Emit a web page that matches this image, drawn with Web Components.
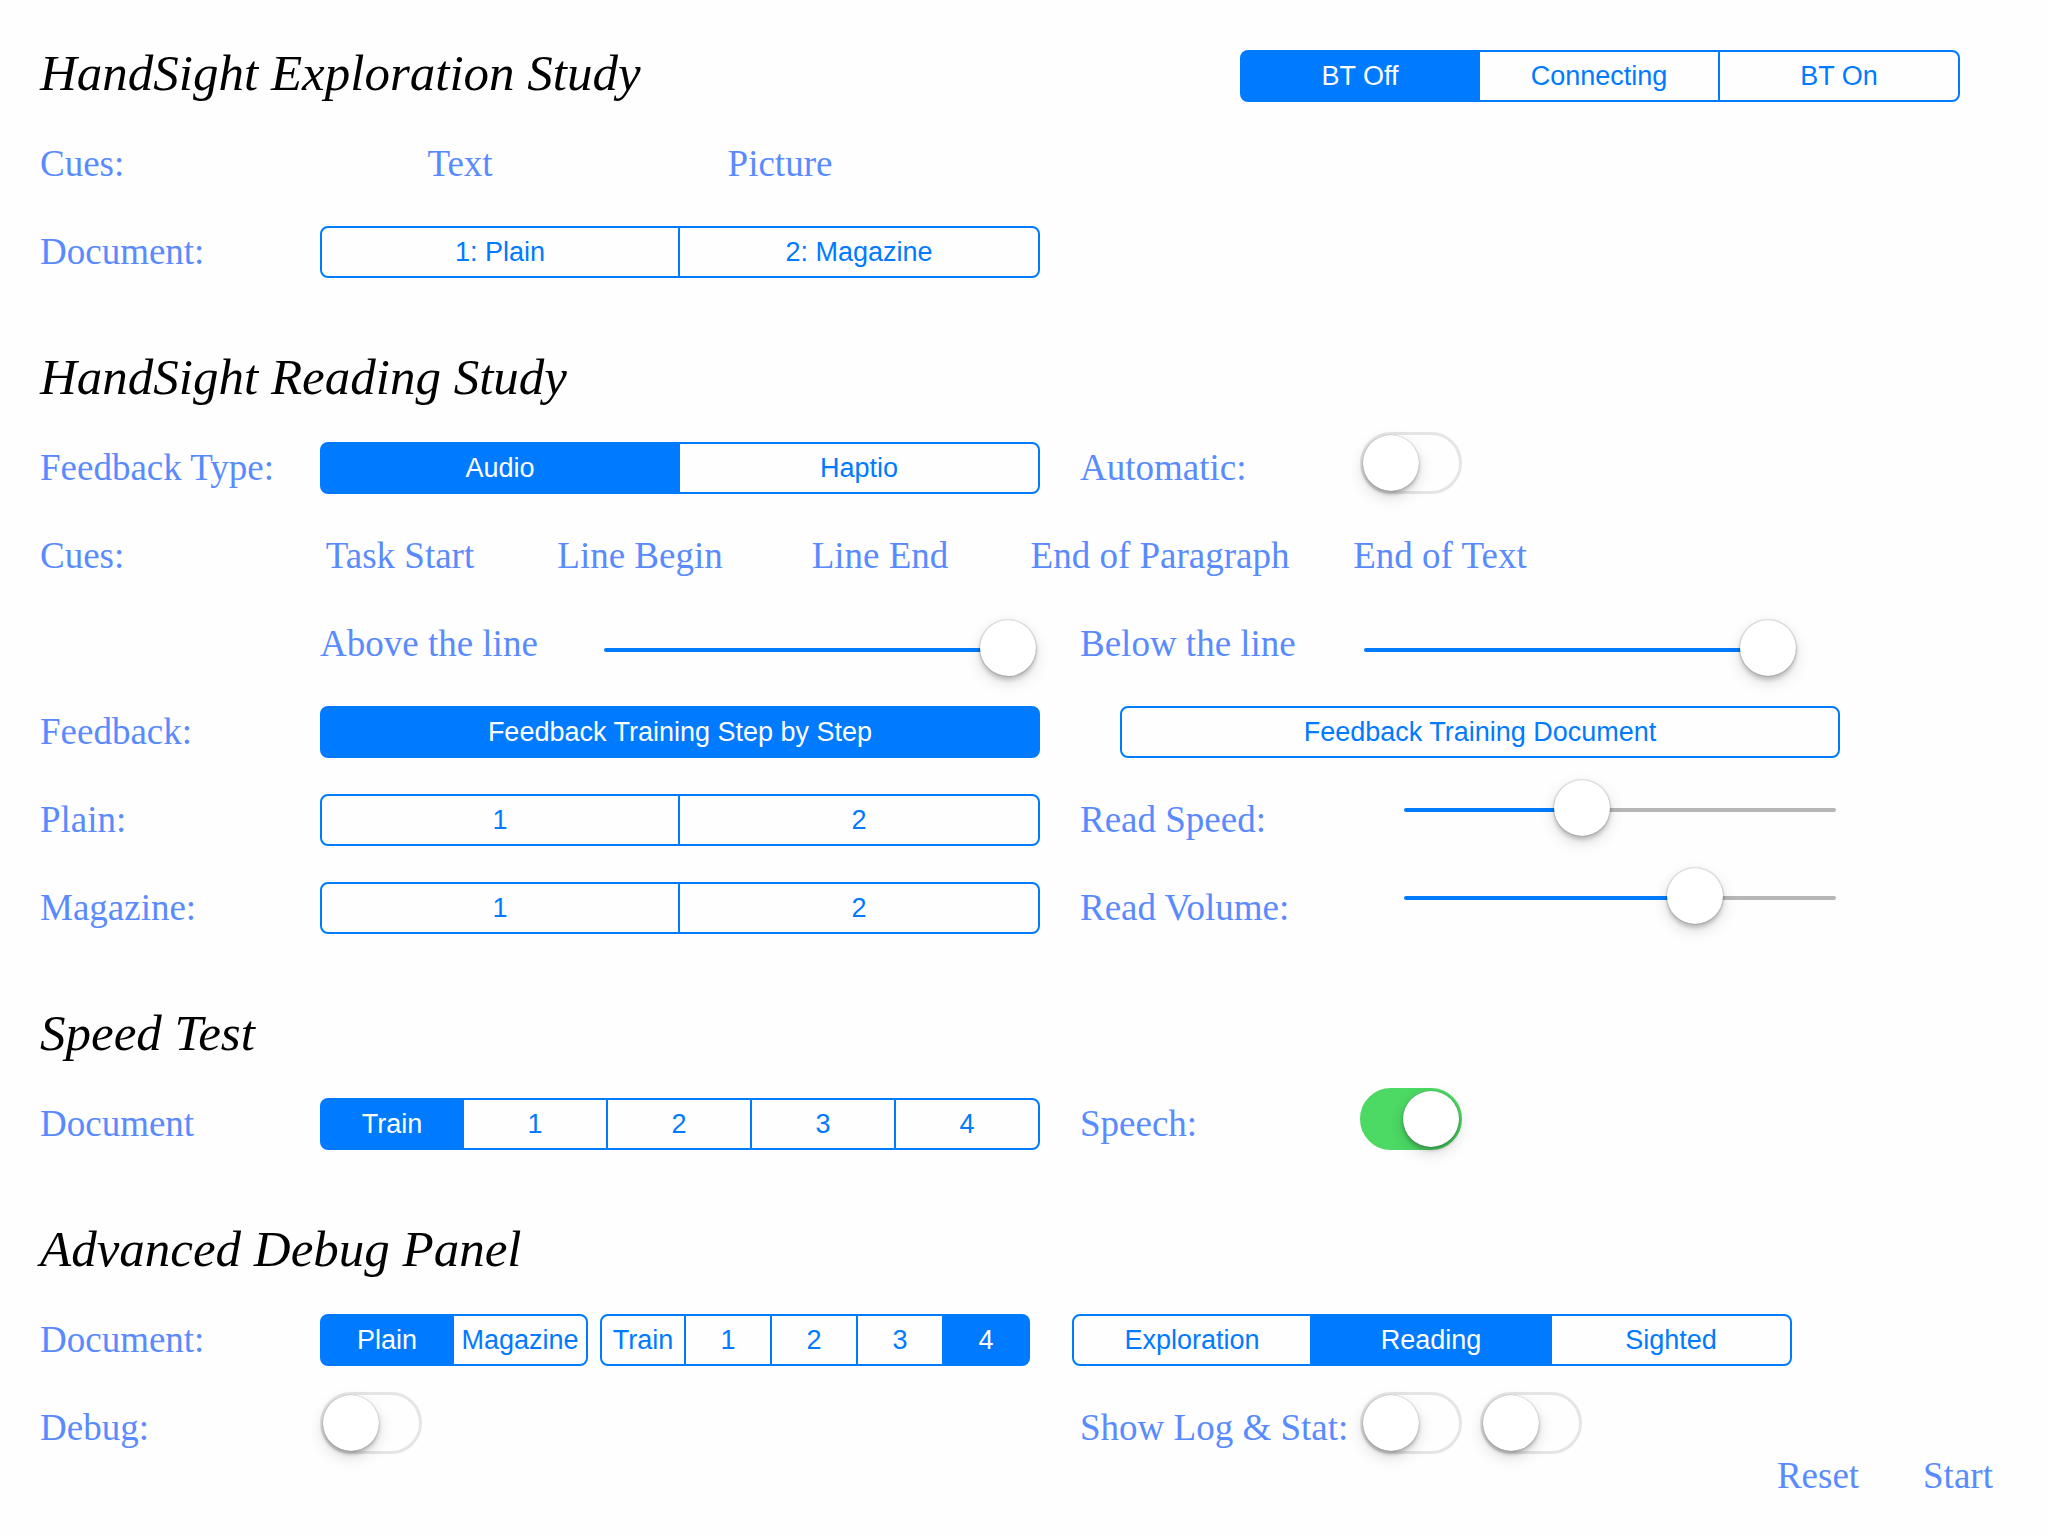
<!DOCTYPE html>
<html lang="en">
<head>
<meta charset="utf-8">
<meta name="viewport" content="width=device-width, initial-scale=1">
<title>HandSight</title>
<style>
  body {
    margin: 0;
    background: #fefefe;
    color: #598bff;
    font: 37px/52px "Liberation Serif", serif;
    --tint: #007aff;
  }
</style>
</head>
<body>
<study-panel></study-panel>

<script>
const define = (name, html, setup) => {
  const template = document.createElement('template');
  template.innerHTML = html;
  customElements.define(name, class extends HTMLElement {
    constructor() {
      super();
      this.attachShadow({ mode: 'open' }).append(template.content.cloneNode(true));
    }
    connectedCallback() {
      if (setup && !this.ready) setup(this, this.shadowRoot);
      this.ready = true;
    }
  });
};

/* Title of a group of rows */
define('script-title', `
  <style>
    :host { display: block; min-width: 0; height: 52px; }
    h2 { margin: 0; color: #000; font: italic 51px/46px "Liberation Serif", serif; white-space: nowrap; }
  </style>
  <h2><slot></slot></h2>`);

/* One line of the form: label, main column, right-hand columns */
define('form-row', `
  <style>
    :host {
      display: grid;
      grid-template-columns: 280px minmax(0, 10fr) 320px minmax(0, 9fr);
      grid-template-rows: 52px;
      align-items: end;
      white-space: nowrap;
    }
    :host([cues="wide"]) { grid-template-columns: 260px 320px 320px; }
    :host([cues="narrow"]) { grid-template-columns: 240px 240px 240px 240px 320px 240px; }
    ::slotted(slider-field) { align-self: start; }
    ::slotted([side]) { grid-column: 3 / -1; padding-left: 40px; }
  </style>
  <slot></slot>`);

/* Segmented control; the segments come as a | separated list */
define('segment-bar', `
  <style>
    :host { display: block; height: 52px; min-width: 0; max-width: 720px; }
    div { display: grid; grid-auto-flow: column; grid-auto-columns: minmax(0, 1fr); }
    button {
      box-sizing: border-box;
      margin: 0;
      padding: 0;
      border: 2px solid var(--tint);
      border-left-width: 0;
      background: transparent;
      color: var(--tint);
      font: 27px/48px "Liberation Sans", sans-serif;
      white-space: nowrap;
    }
    button:first-child { border-left-width: 2px; border-radius: 8px 0 0 8px; }
    button:last-child { border-radius: 0 8px 8px 0; }
    button:only-child { border-radius: 8px; }
    button[aria-pressed="true"] { background: var(--tint); color: #fff; }
  </style>
  <div role="group"></div>`, (host, root) => {
  const group = root.querySelector('div');
  host.getAttribute('items').split('|').forEach((text, i) => {
    const button = document.createElement('button');
    button.type = 'button';
    button.textContent = text;
    button.setAttribute('aria-pressed', String(i) === host.getAttribute('selected'));
    button.addEventListener('click', () => {
      for (const b of group.children) b.setAttribute('aria-pressed', b === button);
    });
    group.append(button);
  });
});

define('text-button', `
  <style>
    :host { display: grid; justify-content: center; height: 52px; }
    button { margin: 0; padding: 0; border: 0; background: none; color: inherit; font: inherit; height: 50px; align-self: start; white-space: nowrap; }
  </style>
  <button type="button"><slot></slot></button>`);

define('row-label', `
  <style>:host { display: block; height: 52px; }</style>
  <slot></slot>`);

/* On/off switch with its label in front */
define('switch-field', `
  <style>
    :host { display: flex; align-items: end; height: 62px; }
    label { width: 280px; height: 52px; }
    :host([bare]) label { display: none; }
    input {
      appearance: none;
      display: grid;
      box-sizing: border-box;
      width: 102px;
      height: 62px;
      margin: 0;
      border: 3px solid #e5e5e5;
      border-radius: 31px;
      flex: none;
    }
    input::before {
      content: "";
      width: 56px;
      height: 56px;
      border-radius: 50%;
      background: #fff;
      box-shadow: 0 0 1px rgba(0,0,0,.4), 0 3px 4px rgba(0,0,0,.24), 0 6px 16px rgba(0,0,0,.14);
    }
    input:checked { background: #4cd964; border-color: #4cd964; }
    input:checked::before { justify-self: end; }
  </style>
  <label for="toggle"><slot></slot></label><input id="toggle" type="checkbox" role="switch">`, (host, root) => {
  const input = root.querySelector('input');
  input.checked = host.hasAttribute('on');
  if (host.hasAttribute('bare')) input.setAttribute('aria-label', host.getAttribute('bare'));
});

/* Slider with its label in front */
define('slider-field', `
  <style>
    :host { display: flex; align-items: start; height: 64px; }
    label { width: 284px; height: 52px; flex: none; }
    :host([raised]) label { width: 324px; }
    :host([raised]) input { margin-top: -16px; }
    input {
      appearance: none;
      flex: 0 1 432px;
      min-width: 0;
      height: 64px;
      margin: 0;
      background: none;
    }
    input::-webkit-slider-runnable-track {
      height: 4px;
      border-radius: 2px;
      background: linear-gradient(to right, var(--tint) calc(28px + (100% - 56px) * var(--value) / 100), #b6b6b6 0);
    }
    input::-webkit-slider-thumb {
      appearance: none;
      width: 56px;
      height: 56px;
      margin-top: -28px;
      border-radius: 50%;
      background: #fff;
      box-shadow: 0 0 2px rgba(0,0,0,.4), 0 4px 4px rgba(0,0,0,.18), 0 6px 16px rgba(0,0,0,.14);
    }
  </style>
  <label for="range"><slot></slot></label><input id="range" type="range" min="0" max="100">`, (host, root) => {
  const input = root.querySelector('input');
  const paint = () => input.style.setProperty('--value', input.value);
  input.value = host.getAttribute('value');
  input.addEventListener('input', paint);
  paint();
});

define('study-panel', `
  <style>
    :host { display: block; }
    main { display: flex; flex-direction: column; gap: 76px; padding: 50px 40px 0; }
    section { display: flex; flex-direction: column; gap: 36px; }
    header { display: flex; justify-content: space-between; gap: 40px; padding-right: 48px; }
    header segment-bar { flex: 0 1 720px; }
    .pair { display: flex; gap: 12px; padding-right: 10px; }
    .pair segment-bar { flex: 268 1 0; }
    .pair segment-bar + segment-bar { flex-grow: 430; }
    .training { padding-left: 80px; }
    .mode { padding-left: 32px; }
    .inset { grid-column: 3 / -1; }
    .log { display: flex; gap: 18px; }
    footer { display: flex; justify-content: flex-end; gap: 40px; height: 44px; padding: 0 40px 12px; }
    footer text-button { width: 100px; margin-top: -4px; }
  </style>
  <main>
    <section>
      <header>
        <script-title>HandSight Exploration Study</script-title>
        <segment-bar items="BT Off|Connecting|BT On" selected="0"></segment-bar>
      </header>
      <form-row cues="wide">
        <row-label>Cues:</row-label>
        <text-button>Text</text-button>
        <text-button>Picture</text-button>
      </form-row>
      <form-row>
        <row-label>Document:</row-label>
        <segment-bar items="1: Plain|2: Magazine"></segment-bar>
      </form-row>
    </section>

    <section>
      <script-title>HandSight Reading Study</script-title>
      <form-row>
        <row-label>Feedback Type:</row-label>
        <segment-bar items="Audio|Haptio" selected="0"></segment-bar>
        <switch-field side>Automatic:</switch-field>
      </form-row>
      <form-row cues="narrow">
        <row-label>Cues:</row-label>
        <text-button>Task Start</text-button>
        <text-button>Line Begin</text-button>
        <text-button>Line End</text-button>
        <text-button>End of Paragraph</text-button>
        <text-button>End of Text</text-button>
      </form-row>
      <form-row>
        <row-label></row-label>
        <slider-field value="100">Above the line</slider-field>
        <slider-field side value="100">Below the line</slider-field>
      </form-row>
      <form-row>
        <row-label>Feedback:</row-label>
        <segment-bar items="Feedback Training Step by Step" selected="0"></segment-bar>
        <div class="inset training"><segment-bar items="Feedback Training Document"></segment-bar></div>
      </form-row>
      <form-row>
        <row-label>Plain:</row-label>
        <segment-bar items="1|2"></segment-bar>
        <slider-field side raised value="40">Read Speed:</slider-field>
      </form-row>
      <form-row>
        <row-label>Magazine:</row-label>
        <segment-bar items="1|2"></segment-bar>
        <slider-field side raised value="70">Read Volume:</slider-field>
      </form-row>
    </section>

    <section>
      <script-title>Speed Test</script-title>
      <form-row>
        <row-label>Document</row-label>
        <segment-bar items="Train|1|2|3|4" selected="0"></segment-bar>
        <switch-field side on>Speech:</switch-field>
      </form-row>
    </section>

    <section>
      <script-title>Advanced Debug Panel</script-title>
      <form-row>
        <row-label>Document:</row-label>
        <div class="pair">
          <segment-bar items="Plain|Magazine" selected="0"></segment-bar>
          <segment-bar items="Train|1|2|3|4" selected="4"></segment-bar>
        </div>
        <div class="inset mode"><segment-bar items="Exploration|Reading|Sighted" selected="1"></segment-bar></div>
      </form-row>
      <form-row>
        <row-label>Debug:</row-label>
        <switch-field bare="Debug"></switch-field>
        <div side class="log">
          <switch-field>Show Log &amp; Stat:</switch-field>
          <switch-field bare="Stat"></switch-field>
        </div>
      </form-row>
    </section>
  </main>
  <footer>
    <text-button>Reset</text-button>
    <text-button>Start</text-button>
  </footer>`);
</script>
</body>
</html>
